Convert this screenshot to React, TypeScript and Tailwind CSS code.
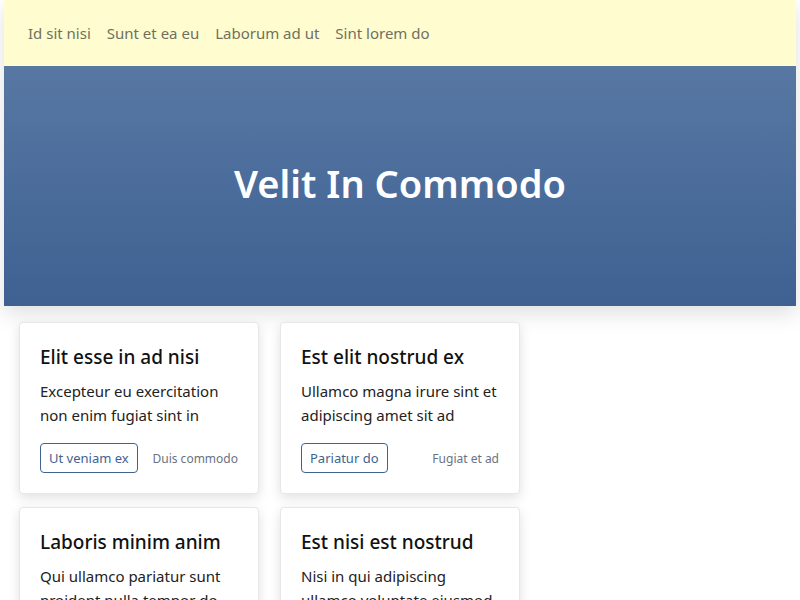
import React from 'react';

const navItems = ['Id sit nisi', 'Sunt et ea eu', 'Laborum ad ut', 'Sint lorem do'];

interface CardData {
  title: string;
  body: string;
  action: string;
  link: string;
}

const cards: CardData[] = [
  { title: 'Elit esse in ad nisi', body: 'Excepteur eu exercitation non enim fugiat sint in', action: 'Ut veniam ex', link: 'Duis commodo' },
  { title: 'Est elit nostrud ex', body: 'Ullamco magna irure sint et adipiscing amet sit ad', action: 'Pariatur do', link: 'Fugiat et ad' },
  { title: 'Laboris minim anim', body: 'Qui ullamco pariatur sunt proident nulla tempor do', action: 'Magna sit', link: 'Amet ex' },
  { title: 'Est nisi est nostrud', body: 'Nisi in qui adipiscing ullamco voluptate eiusmod', action: 'Irure ad', link: 'Sunt enim' },
];

function Card({ card }: { card: CardData }) {
  return (
    <div className="w-[240px] bg-white border border-gray-200 rounded-[4px] shadow-[0_4px_12px_rgba(0,0,0,0.12)] px-5 pt-5 pb-5">
      <h2 className="text-[19px] leading-[28px] font-medium text-[#111]">{card.title}</h2>
      <p className="mt-2 text-[15px] leading-[24px] text-[#222]">{card.body}</p>
      <div className="mt-4 flex items-center justify-between">
        <button className="h-[30px] px-2 pt-[2px] border border-[#3f6293] rounded-[4px] text-[13px] text-[#3f6293]">{card.action}</button>
        <span className="pt-[2px] text-[12px] text-gray-500">{card.link}</span>
      </div>
    </div>
  );
}

export default function App() {
  return (
    <div className="min-h-[600px] bg-white font-['Noto_Sans',sans-serif]">
      {/* Header + hero */}
      <div className="mx-1 shadow-[0_8px_20px_rgba(0,0,0,0.12)]">
        <nav className="h-[66px] bg-[#fffdd0] flex items-center gap-4 px-6">
          {navItems.map((item) => (
            <a key={item} className="text-[15px] text-[#707060]">{item}</a>
          ))}
        </nav>
        <div className="h-[240px] bg-gradient-to-b from-[#5878a3] to-[#3e6192] flex items-center justify-center">
          <h1 className="text-[38px] leading-[48px] font-semibold text-white pb-[6px]">Velit In Commodo</h1>
        </div>
      </div>

      {/* Cards */}
      <div className="grid grid-cols-[240px_240px] gap-x-[21px] gap-y-[13px] pl-[19px] pt-4">
        {cards.map((c) => (
          <Card key={c.title} card={c} />
        ))}
      </div>
    </div>
  );
}
